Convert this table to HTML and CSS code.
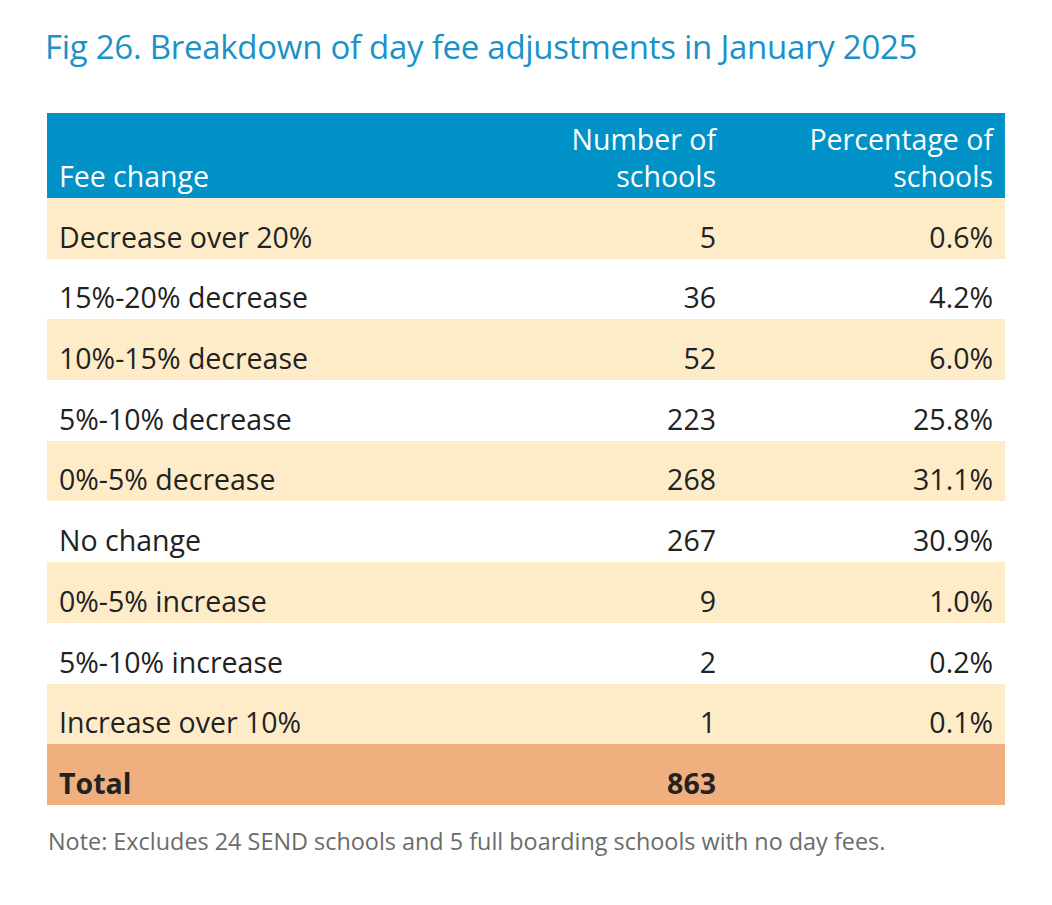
FILE: index.html
```html
<!DOCTYPE html>
<html>
<head>
<meta charset="utf-8">
<link rel="stylesheet" href="styles.css">
</head>
<body>
<div class="page">
  <h1 class="title">Fig 26. Breakdown of day fee adjustments in January 2025</h1>
  <table class="fees">
    <colgroup><col class="c1"><col class="c2"><col class="c3"></colgroup>
    <thead>
      <tr><th class="lbl">Fee change</th><th class="num">Number of<br>schools</th><th class="num">Percentage of<br>schools</th></tr>
    </thead>
    <tbody>
      <tr class="odd"><td>Decrease over 20%</td><td class="num">5</td><td class="num">0.6%</td></tr>
      <tr><td>15%-20% decrease</td><td class="num">36</td><td class="num">4.2%</td></tr>
      <tr class="odd"><td>10%-15% decrease</td><td class="num">52</td><td class="num">6.0%</td></tr>
      <tr><td>5%-10% decrease</td><td class="num">223</td><td class="num">25.8%</td></tr>
      <tr class="odd"><td>0%-5% decrease</td><td class="num">268</td><td class="num">31.1%</td></tr>
      <tr><td>No change</td><td class="num">267</td><td class="num">30.9%</td></tr>
      <tr class="odd"><td>0%-5% increase</td><td class="num">9</td><td class="num">1.0%</td></tr>
      <tr><td>5%-10% increase</td><td class="num">2</td><td class="num">0.2%</td></tr>
      <tr class="odd"><td>Increase over 10%</td><td class="num">1</td><td class="num">0.1%</td></tr>
      <tr class="total"><td>Total</td><td class="num">863</td><td class="num"></td></tr>
    </tbody>
  </table>
  <p class="note">Note: Excludes 24 SEND schools and 5 full boarding schools with no day fees.</p>
</div>
</body>
</html>
```
FILE: styles.css
```css
html, body { margin: 0; padding: 0; background: #fff; }
body { font-family: "Open Sans", "Noto Sans", sans-serif; }
.page { padding: 27px 47px 0 47px; }
.title {
  margin: 0;
  font-weight: 400;
  font-size: 33px;
  line-height: 40px;
  color: #1a92c8;
  letter-spacing: -0.27px;
  margin-left: -2px;
}
.fees {
  margin-top: 46px;
  width: 958px;
  border-collapse: collapse;
  table-layout: fixed;
  font-size: 28.5px;
  line-height: 37px;
  color: #222;
}
.c1 { width: 493px; }
.c2 { width: 188px; }
.c3 { width: 277px; }
.fees th {
  background: #0091c7;
  color: #fff;
  font-weight: 400;
  height: 85px;
  box-sizing: border-box;
  padding: 0 12px 3px 12px;
  vertical-align: bottom;
  text-align: left;
}
.fees th.num, .fees td.num { text-align: right; }
.fees td {
  height: 60.7px;
  padding: 0 12px 3px 12px;
  box-sizing: border-box;
  vertical-align: bottom;
  white-space: nowrap;
}
.fees tr.odd td { background: #feecc9; }
.fees tr.total td { background: #f0af7f; font-weight: 700; }
.note {
  margin: 20px 0 0 1px;
  font-size: 23.4px;
  line-height: 32px;
  color: #6b6b6b;
}
```
